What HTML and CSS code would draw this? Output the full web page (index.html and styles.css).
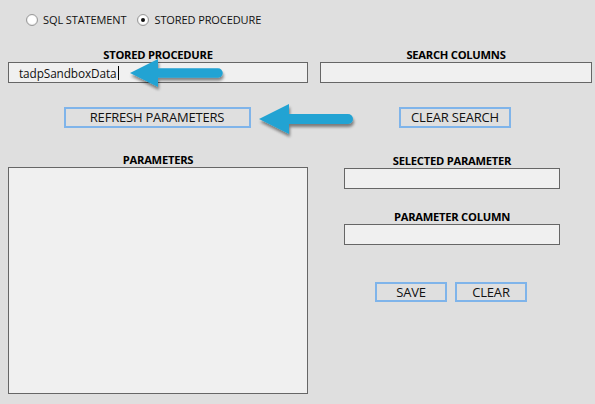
FILE: index.html
```html
<!DOCTYPE html>
<html>
<head>
<meta charset="utf-8">
<link rel="stylesheet" href="styles.css">
</head>
<body>
<div class="form">
  <div class="mode">
    <label class="radio"><span class="dot"></span>SQL STATEMENT</label>
    <label class="radio"><span class="dot on"></span>STORED PROCEDURE</label>
  </div>

  <div class="row top">
    <div class="col left">
      <div class="lbl">STORED PROCEDURE</div>
      <div class="box field"><span class="val">tadpSandboxData</span><span class="caret"></span></div>
    </div>
    <div class="col right">
      <div class="lbl">SEARCH COLUMNS</div>
      <div class="box field"></div>
    </div>
  </div>

  <div class="row btns">
    <div class="col left center"><button class="btn refresh">REFRESH PARAMETERS</button></div>
    <div class="col right center"><button class="btn csearch">CLEAR SEARCH</button></div>
  </div>

  <div class="row bottom">
    <div class="col left">
      <div class="lbl">PARAMETERS</div>
      <div class="box list"></div>
    </div>
    <div class="col right">
      <div class="sub">
        <div class="lbl">SELECTED PARAMETER</div>
        <div class="box field"></div>
        <div class="lbl second">PARAMETER COLUMN</div>
        <div class="box field"></div>
        <div class="actions">
          <button class="btn small">SAVE</button>
          <button class="btn small">CLEAR</button>
        </div>
      </div>
    </div>
  </div>
</div>

<svg class="arrow a1" width="110" height="40" viewBox="0 0 110 40">
  <defs>
    <filter id="sh" x="-20%" y="-30%" width="140%" height="170%">
      <feGaussianBlur in="SourceAlpha" stdDeviation="1.6"/>
      <feOffset dx="1" dy="3"/>
      <feComponentTransfer><feFuncA type="linear" slope="0.45"/></feComponentTransfer>
      <feMerge><feMergeNode/><feMergeNode in="SourceGraphic"/></feMerge>
    </filter>
  </defs>
  <g filter="url(#sh)">
    <polygon points="5,17 33,3 33,31" fill="#22a3d3"/>
    <line x1="30" y1="17" x2="93" y2="17" stroke="#22a3d3" stroke-width="9.5" stroke-linecap="round"/>
  </g>
</svg>
<svg class="arrow a2" width="110" height="44" viewBox="0 0 110 44">
  <g filter="url(#sh)">
    <polygon points="4,18 34,3 34,33" fill="#22a3d3"/>
    <line x1="30" y1="18" x2="93" y2="18" stroke="#22a3d3" stroke-width="10" stroke-linecap="round"/>
  </g>
</svg>
</body>
</html>
```

FILE: styles.css
```css
html, body {
  margin: 0;
  padding: 0;
  background: #dfdfdf;
  width: 595px;
  height: 404px;
  overflow: hidden;
  font-family: "Open Sans", "DejaVu Sans", sans-serif;
  color: #111;
}
body { position: relative; }

.form {
  padding: 0 0 0 8px;
  width: 584px;
}

.mode {
  display: flex;
  gap: 11px;
  padding: 12px 0 0 18px;
  height: 16px;
}
.radio {
  display: flex;
  align-items: center;
  gap: 5px;
  font-size: 11px;
  letter-spacing: -0.1px;
  color: #111;
  line-height: 14px;
}
.dot {
  width: 10px;
  height: 10px;
  border-radius: 50%;
  border: 1px solid #9a9a9a;
  background: radial-gradient(circle at 50% 40%, #ffffff 55%, #e6e6e6 100%);
  box-shadow: inset 0 0 1px #bbb;
  position: relative;
  display: inline-block;
}
.dot.on::after {
  content: "";
  position: absolute;
  left: 3px;
  top: 3px;
  width: 4px;
  height: 4px;
  border-radius: 50%;
  background: #111;
}

.row {
  display: flex;
  gap: 12px;
}
.col.left { width: 300px; }
.col.right { width: 272px; }
.col { display: flex; flex-direction: column; }
.col.center { align-items: center; }

.top { margin-top: 20px; }

.lbl {
  font-weight: 700;
  font-size: 11.2px;
  letter-spacing: -0.25px;
  text-align: center;
  line-height: 14px;
  height: 14px;
  color: #000;
}

.box {
  box-sizing: border-box;
  border: 1px solid #666;
  background: #f0f0f0;
}
.field {
  height: 21px;
  display: flex;
  align-items: center;
  padding-left: 10px;
}
.val {
  font-size: 11.8px;
  color: #111;
  letter-spacing: -0.1px;
}
.caret {
  width: 1px;
  height: 14px;
  background: #000;
  margin-left: 1px;
}

.btns { margin-top: 24px; }
.btn {
  box-sizing: border-box;
  height: 21px;
  border: 2px solid #7fb4ea;
  background: #dfdfdf;
  font-family: "Open Sans", "DejaVu Sans", sans-serif;
  font-size: 13px;
  color: #111;
  padding: 0;
  line-height: 17px;
  letter-spacing: -0.2px;
}
.refresh { width: 187px; margin-left: -2px; }
.csearch { width: 112px; margin-left: -2px; }

.bottom { margin-top: 25px; }
.list { height: 227px; }

.sub {
  width: 216px;
  margin-left: 24px;
  display: flex;
  flex-direction: column;
}
.sub .lbl { margin-top: 1px; margin-bottom: 0; }
.sub .second { margin-top: 21px; }
.actions {
  display: flex;
  justify-content: center;
  gap: 8px;
  margin-top: 37px;
  padding-right: 2px;
}
.small { width: 72px; height: 20px; line-height: 16px; }

.arrow { position: absolute; }
.a1 { left: 125px; top: 56px; }
.a2 { left: 255px; top: 101px; }
```
